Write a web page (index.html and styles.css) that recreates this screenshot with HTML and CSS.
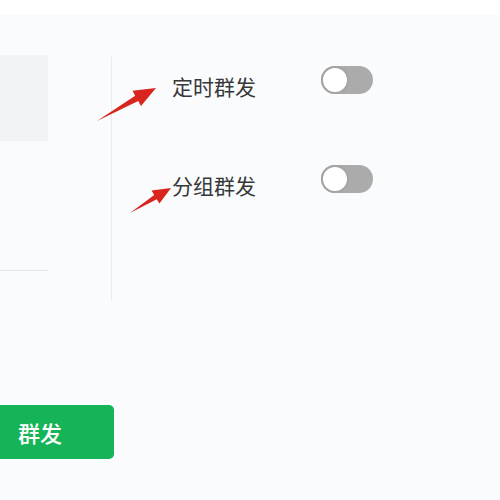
FILE: index.html
```html
<!DOCTYPE html>
<html lang="zh-CN">
<head>
    <meta charset="UTF-8">
    <meta name="viewport" content="width=device-width, initial-scale=1.0">
    <title>群发设置</title>
    <link rel="stylesheet" href="styles.css">
</head>
<body>

<div class="topbar"></div>

<div class="main">
    <div class="left">
        <div class="preview"></div>
        <div class="line"></div>
    </div>

    <div class="options">
        <div class="option">
            <span class="label">定时群发</span>
            <span class="switch"><span class="knob"></span></span>
        </div>
        <div class="option">
            <span class="label">分组群发</span>
            <span class="switch"><span class="knob"></span></span>
        </div>
    </div>
</div>

<div class="footer">
    <a href="#" class="send-btn">群发</a>
</div>

<!-- 标注箭头 -->
<svg class="marks" width="500" height="500" viewBox="0 0 500 500">
    <polygon fill="#d8251d" points="97,121 135.2,95.8 132.5,90.8 156,88 141,106 138.2,101"/>
    <polygon fill="#d8251d" points="130,213 154.2,195 151.6,190.6 171,188 159.4,203.5 156.8,199.2"/>
</svg>

</body>
</html>
```

FILE: styles.css
```css
body {
    margin: 0;
    padding: 0;
    background-color: #f9fbfd;
    font-family: "Noto Sans CJK SC", "Noto Sans", sans-serif;
    width: 500px;
    height: 500px;
    overflow: hidden;
    position: relative;
}

.topbar {
    height: 15px;
    background-color: #ffffff;
}

.main {
    display: flex;
    height: 285px;
}

.left {
    width: 48px;
    margin-right: 63px;
}

.preview {
    margin-top: 40px;
    height: 86px;
    background-color: #f2f3f5;
}

.line {
    margin-top: 129px;
    height: 1px;
    background-color: #e4e6ea;
}

.options {
    border-left: 1px solid #e9ebee;
    margin-top: 42px;
    padding-left: 60px;
    display: flex;
    flex-direction: column;
    gap: 70px;
}

.option {
    display: grid;
    grid-template-columns: 149px 52px;
    align-items: start;
    height: 29px;
}

.label {
    font-size: 21px;
    line-height: 21px;
    color: #383838;
    margin-top: 19px;
}

.switch {
    display: block;
    width: 52px;
    height: 28px;
    margin-top: 9px;
    border-radius: 14px;
    background-color: #ababab;
    position: relative;
}

.knob {
    position: absolute;
    left: 0;
    top: 0;
    width: 24px;
    height: 24px;
    border-radius: 50%;
    border: 2px solid #a4a4a4;
    background-color: #ffffff;
}

.footer {
    padding-top: 105px;
}

.send-btn {
    display: block;
    width: 96px;
    height: 54px;
    padding-left: 18px;
    line-height: 54px;
    background-color: #15b458;
    color: #ffffff;
    font-size: 22px;
    font-weight: 500;
    text-decoration: none;
    border-radius: 0 5px 5px 0;
}

.marks {
    position: absolute;
    left: 0;
    top: 0;
    pointer-events: none;
}
```
